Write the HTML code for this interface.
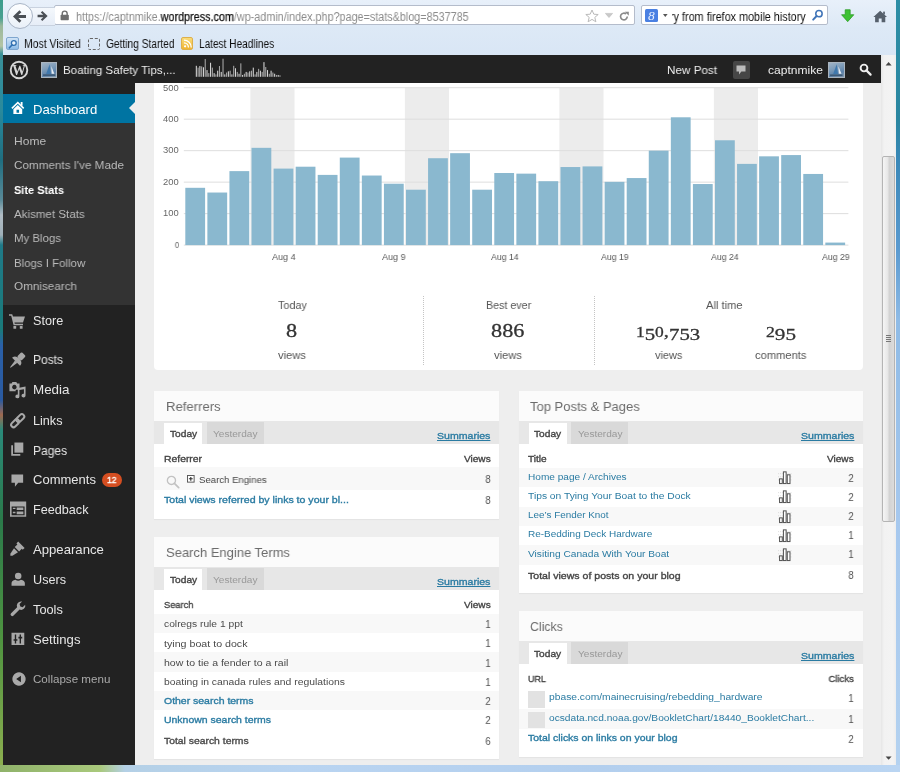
<!DOCTYPE html>
<html lang="en">
<head>
<meta charset="utf-8">
<title>Site Stats ‹ Boating Safety Tips — WordPress</title>
<style>
*{box-sizing:border-box}
html,body{margin:0;padding:0}
body{width:900px;height:772px;overflow:hidden;position:relative;background:#b9d3ee;font-family:"Liberation Sans",sans-serif;font-size:11px;color:#333}
.abs,.a{position:absolute}
svg{position:absolute;overflow:visible}
.t{position:absolute;white-space:pre;line-height:16px;height:16px;z-index:5;will-change:transform}
/* window frame */
#fl{left:0;top:0;width:3px;height:772px;z-index:9;background:linear-gradient(#3c9c8c 0,#48a090 18px,#9ab89c 26px,#b4c4a4 46px,#3a9098 54px,#2a8a9c 110px,#1f6e80 160px,#5a8a98 200px,#b0bcc4 215px,#a0b0b8 235px,#1f7a88 245px,#1a7a7a 330px,#2a60a8 345px,#2a5aa0 400px,#a06a50 415px,#2a8a7a 430px,#2b7a4a 520px,#4f9440 640px,#8fb050 772px)}
#fr{left:896px;top:0;width:4px;height:772px;z-index:9;background:linear-gradient(#2d8ea6 0,#2a86a0 120px,#3a88b8 160px,#5a9ad0 250px,#8fbbe6 320px,#a6c8ee 520px,#b4d2f0 772px)}
#fb{left:0;top:765px;width:900px;height:7px;z-index:9;background:linear-gradient(90deg,#8fb26a 0,#a9c97c 100px,#b4d0e6 125px,#b9d4f1 300px,#b3cfee 600px,#bad5f2 900px)}
/* browser chrome */
#chrome{left:3px;top:0;width:893px;height:55px;background:linear-gradient(#e8f0fa 0,#dde9f6 28px,#d9e6f5 55px)}
#urlbar{left:50.6px;top:4.8px;width:581.4px;height:20.6px;background:#fff;border:1px solid #b4bccb;border-radius:2px}
#searchbar{left:637.8px;top:4.8px;width:187.6px;height:20.6px;background:#fff;border:1px solid #b4bccb;border-radius:2px}
/* page */
#adminbar{left:3px;top:55px;width:878px;height:28px;background:#222}
#sidebar{left:3px;top:83px;width:132px;height:682px;background:#222}
#submenu{left:3px;top:122.6px;width:132px;height:182.6px;background:#333}
#dash{left:3px;top:93.8px;width:132px;height:28.8px;background:#0074a2}
#dash:after{content:"";position:absolute;right:0;top:8.2px;border:6.6px solid transparent;border-right-color:#eee;border-left-width:0}
#content{left:135px;top:83px;width:746px;height:682px;background:#eee;overflow:hidden}
#scroll{left:881px;top:55px;width:15px;height:710px;background:linear-gradient(90deg,#e6e6e6 0,#f2f2f2 3px,#f3f3f3 12px,#ededed 15px)}
#thumb{left:881.5px;top:156px;width:13.5px;height:366px;border:1px solid #b4b4b4;border-radius:2px;background:linear-gradient(90deg,#f5f5f5 0,#e6e6e6 45%,#d2d2d2 55%,#dcdcdc 100%)}
.card{position:absolute;background:#fff;box-shadow:0 1px 1px rgba(0,0,0,.04)}
.tb{position:absolute;left:0;width:100%;background:#e7e7e7}
.tab1{position:absolute;background:#fff}
.tab2{position:absolute;background:#d9d9d9}
.alt{position:absolute;left:0;width:100%;background:#f8f8f8}
.hd{position:absolute;left:0;top:0;width:100%;background:#fbfbfb}
</style>
</head>
<body>
<div class="a" id="chrome">
  <div class="a" id="urlbar"></div>
  <div class="a" id="searchbar"></div>
</div>
<div class="a" style="left:6.6px;top:2.8px;width:26.4px;height:26.4px;border-radius:50%;background:linear-gradient(#fdfeff,#e9f0f8);border:1px solid #a9b5c6;z-index:3"></div>
<div class="a" style="left:30px;top:6.6px;width:25px;height:19px;background:linear-gradient(#f4f8fc,#e6edf7);border:1px solid #c9d2df;border-left:none;border-right:none;z-index:2"></div>
<svg style="left:12.4px;top:8.6px;z-index:6" width="15" height="15" viewBox="0 0 15 15"><path d="M7.4 1.2 L9.4 3.2 L6.4 6 L14 6 L14 9 L6.4 9 L9.4 11.8 L7.4 13.8 L1 7.5 Z" fill="#4a4f55"/></svg>
<svg style="left:36.6px;top:10.2px;z-index:6" width="11.4" height="12" viewBox="0 0 12 12"><path d="M5.6 .8 L4 2.4 L6.6 4.8 L.6 4.8 L.6 7.2 L6.6 7.2 L4 9.6 L5.6 11.2 L11.2 6 Z" fill="#4a4f55"/></svg>
<svg style="left:60.4px;top:10.4px;z-index:6" width="9.4" height="11" viewBox="0 0 10 11"><path d="M2.4 5 L2.4 3.4 a2.6 2.6 0 0 1 5.2 0 L7.6 5" fill="none" stroke="#6e6e6e" stroke-width="1.5"/><rect x=".6" y="4.8" width="8.8" height="5.8" rx=".8" fill="#6e6e6e"/></svg>
<svg style="left:585.4px;top:8.6px;z-index:6" width="14" height="14" viewBox="0 0 14 14"><path d="M7 1 L8.8 5.2 L13.2 5.5 L9.8 8.4 L10.9 12.8 L7 10.4 L3.1 12.8 L4.2 8.4 L.8 5.5 L5.2 5.2 Z" fill="#fff" stroke="#b9b9b9" stroke-width="1"/></svg>
<svg style="left:605.2px;top:13.4px;z-index:6" width="8" height="5" viewBox="0 0 8 5"><path d="M.4 .4 L7.6 .4 L4 4.6 Z" fill="#c9c9c9" stroke="#b5b5b5" stroke-width=".5"/></svg>
<svg style="left:619.4px;top:10.6px;z-index:6" width="10.6" height="11" viewBox="0 0 11 11"><path d="M8.6 5.6 a3.5 3.5 0 1 1 -1.2 -2.7" fill="none" stroke="#8a8a8a" stroke-width="1.7"/><path d="M6 .6 L10.2 .6 L10.2 4.8 Z" fill="#8a8a8a"/></svg>
<div class="a" style="left:645px;top:8.8px;width:13.4px;height:13.6px;background:#4a80e2;border-radius:1.5px;z-index:3"></div>
<span class="t" style="left:648.4px;top:7.6px;font-size:13.5px;color:#e8f0ff;font-family:'Liberation Serif',serif;font-style:italic;z-index:4">8</span>
<svg style="left:662.8px;top:14.4px;z-index:6" width="4.6" height="3" viewBox="0 0 5 3"><path d="M0 0 L5 0 L2.5 3 Z" fill="#555"/></svg>
<svg style="left:812.2px;top:9.4px;z-index:6" width="11.6" height="12" viewBox="0 0 12 12"><circle cx="7.2" cy="4.6" r="3.3" fill="#fff" stroke="#3f74b8" stroke-width="1.6"/><path d="M4.8 7 L1.2 10.8" stroke="#3f74b8" stroke-width="2" stroke-linecap="round"/></svg>
<svg style="left:841.4px;top:9.2px;z-index:6" width="13.4" height="13.4" viewBox="0 0 14 14"><path d="M4.4 .8 L9.6 .8 L9.6 6 L13.4 6 L7 13.2 L.6 6 L4.4 6 Z" fill="#3ec234" stroke="#2a9a24" stroke-width=".8"/></svg>
<svg style="left:872.6px;top:9.6px;z-index:6" width="14.4" height="13" viewBox="0 0 15 13"><path d="M7.5 .6 L14.6 7 L12.8 7 L12.8 12.6 L9 12.6 L9 8.6 L6 8.6 L6 12.6 L2.2 12.6 L2.2 7 L.4 7 Z" fill="#56606c"/><rect x="10.6" y="1.4" width="1.8" height="3" fill="#56606c"/></svg>
<div class="a" style="left:6.4px;top:36.6px;width:12.8px;height:13.4px;border-radius:2px;background:linear-gradient(#cfe3f6,#8dbbe6);border:1px solid #7ea6cf;z-index:3"></div>
<svg style="left:8px;top:38.6px;z-index:6" width="10" height="10" viewBox="0 0 10 10"><circle cx="5.8" cy="4" r="2.4" fill="#eaf3fb" stroke="#2f6fb0" stroke-width="1.3"/><path d="M4 6 L1.4 8.8" stroke="#2f6fb0" stroke-width="1.6" stroke-linecap="round"/></svg>
<div class="a" style="left:87.6px;top:37.6px;width:12px;height:12px;border:1px dashed #666;border-radius:2px;z-index:3"></div>
<div class="a" style="left:181.4px;top:37.4px;width:12px;height:12.4px;border-radius:2px;background:linear-gradient(#f9dc7a,#f0b432);border:1px solid #ddb04c;z-index:3"></div>
<svg style="left:182.8px;top:39px;z-index:6" width="9.4" height="9.4" viewBox="0 0 10 10"><circle cx="2.2" cy="7.8" r="1.2" fill="#fff"/><path d="M1 4.2 a4.8 4.8 0 0 1 4.8 4.8 M1 1.2 a7.8 7.8 0 0 1 7.8 7.8" fill="none" stroke="#fff" stroke-width="1.4"/></svg>
<div class="a" id="adminbar"></div>
<div class="a" id="sidebar"></div>
<div class="a" id="submenu"></div>
<div class="a" id="dash"></div>
<div class="a" id="content"></div>
<div class="card" style="left:154.2px;top:83px;width:708.8px;height:286.6px;border-radius:0 0 4px 4px;box-shadow:none"></div>
<svg style="left:0;top:0" width="900" height="772" viewBox="0 0 900 772">
<rect x="250.4" y="87.7" width="44.1" height="157.4" fill="#ececec"/>
<rect x="404.9" y="87.7" width="44.1" height="157.4" fill="#ececec"/>
<rect x="559.4" y="87.7" width="44.1" height="157.4" fill="#ececec"/>
<rect x="713.9" y="87.7" width="44.1" height="157.4" fill="#ececec"/>
<rect x="183.8" y="244.60" width="664.6" height="1" fill="#dedede"/>
<rect x="183.8" y="213.12" width="664.6" height="1" fill="#dedede"/>
<rect x="183.8" y="181.64" width="664.6" height="1" fill="#dedede"/>
<rect x="183.8" y="150.16" width="664.6" height="1" fill="#dedede"/>
<rect x="183.8" y="118.68" width="664.6" height="1" fill="#dedede"/>
<rect x="183.8" y="87.20" width="664.6" height="1" fill="#dedede"/>
<rect x="185.30" y="187.81" width="19.8" height="57.29" fill="#8ab8cf"/>
<rect x="207.37" y="192.53" width="19.8" height="52.57" fill="#8ab8cf"/>
<rect x="229.44" y="171.12" width="19.8" height="73.98" fill="#8ab8cf"/>
<rect x="251.51" y="147.83" width="19.8" height="97.27" fill="#8ab8cf"/>
<rect x="273.58" y="168.60" width="19.8" height="76.50" fill="#8ab8cf"/>
<rect x="295.65" y="166.71" width="19.8" height="78.39" fill="#8ab8cf"/>
<rect x="317.72" y="174.90" width="19.8" height="70.20" fill="#8ab8cf"/>
<rect x="339.79" y="157.59" width="19.8" height="87.51" fill="#8ab8cf"/>
<rect x="361.86" y="175.53" width="19.8" height="69.57" fill="#8ab8cf"/>
<rect x="383.93" y="183.71" width="19.8" height="61.39" fill="#8ab8cf"/>
<rect x="406.00" y="189.70" width="19.8" height="55.40" fill="#8ab8cf"/>
<rect x="428.07" y="158.22" width="19.8" height="86.88" fill="#8ab8cf"/>
<rect x="450.14" y="153.18" width="19.8" height="91.92" fill="#8ab8cf"/>
<rect x="472.21" y="189.70" width="19.8" height="55.40" fill="#8ab8cf"/>
<rect x="494.28" y="173.01" width="19.8" height="72.09" fill="#8ab8cf"/>
<rect x="516.35" y="173.64" width="19.8" height="71.46" fill="#8ab8cf"/>
<rect x="538.42" y="181.20" width="19.8" height="63.90" fill="#8ab8cf"/>
<rect x="560.49" y="167.03" width="19.8" height="78.07" fill="#8ab8cf"/>
<rect x="582.56" y="166.40" width="19.8" height="78.70" fill="#8ab8cf"/>
<rect x="604.63" y="181.83" width="19.8" height="63.27" fill="#8ab8cf"/>
<rect x="626.70" y="178.05" width="19.8" height="67.05" fill="#8ab8cf"/>
<rect x="648.77" y="150.66" width="19.8" height="94.44" fill="#8ab8cf"/>
<rect x="670.84" y="117.29" width="19.8" height="127.81" fill="#8ab8cf"/>
<rect x="692.91" y="184.03" width="19.8" height="61.07" fill="#8ab8cf"/>
<rect x="714.98" y="140.27" width="19.8" height="104.83" fill="#8ab8cf"/>
<rect x="737.05" y="163.88" width="19.8" height="81.22" fill="#8ab8cf"/>
<rect x="759.12" y="156.33" width="19.8" height="88.77" fill="#8ab8cf"/>
<rect x="781.19" y="155.07" width="19.8" height="90.03" fill="#8ab8cf"/>
<rect x="803.26" y="173.96" width="19.8" height="71.14" fill="#8ab8cf"/>
<rect x="825.33" y="242.58" width="19.8" height="2.52" fill="#8ab8cf"/>
<line x1="423.5" y1="295.5" x2="423.5" y2="364.5" stroke="#c4c4c4" stroke-width="1" stroke-dasharray="1 1" shape-rendering="crispEdges"/>
<line x1="594.5" y1="295.5" x2="594.5" y2="364.5" stroke="#c4c4c4" stroke-width="1" stroke-dasharray="1 1" shape-rendering="crispEdges"/>
</svg>
<div class="card" style="left:154.2px;top:391px;width:344.8px;height:127.8px"><div class="hd" style="height:30px"></div><div class="tb" style="top:30px;height:23px"></div><div class="tab1" style="left:9.8px;top:32px;width:38.4px;height:21px"></div><div class="tab2" style="left:52.6px;top:31.2px;width:56.8px;height:21.8px"></div><div class="alt" style="top:76.4px;height:22.8px"></div></div>
<div class="card" style="left:518.8px;top:391px;width:344.2px;height:202px"><div class="hd" style="height:30px"></div><div class="tb" style="top:30px;height:23px"></div><div class="tab1" style="left:9.8px;top:32px;width:38.4px;height:21px"></div><div class="tab2" style="left:52.6px;top:31.2px;width:56.8px;height:21.8px"></div><div class="alt" style="top:76.8px;height:19.4px"></div><div class="alt" style="top:115.6px;height:19.4px"></div><div class="alt" style="top:154.4px;height:19.4px"></div></div>
<div class="card" style="left:154.2px;top:537px;width:344.8px;height:221.6px"><div class="hd" style="height:30px"></div><div class="tb" style="top:30px;height:23px"></div><div class="tab1" style="left:9.8px;top:32px;width:38.4px;height:21px"></div><div class="tab2" style="left:52.6px;top:31.2px;width:56.8px;height:21.8px"></div><div class="alt" style="top:76.8px;height:19.3px"></div><div class="alt" style="top:115.4px;height:19.3px"></div><div class="alt" style="top:154px;height:19.3px"></div></div>
<div class="card" style="left:518.8px;top:611px;width:344.2px;height:146.4px"><div class="hd" style="height:30px"></div><div class="tb" style="top:30px;height:23px"></div><div class="tab1" style="left:9.8px;top:32px;width:38.4px;height:21px"></div><div class="tab2" style="left:52.6px;top:31.2px;width:56.8px;height:21.8px"></div><div class="alt" style="top:98px;height:20.4px"></div><div class="a" style="left:9.4px;top:80.4px;width:16.6px;height:16.6px;background:#e2e2e2"></div><div class="a" style="left:9.4px;top:100.6px;width:16.6px;height:16.6px;background:#e2e2e2"></div></div>
<svg style="left:10.899999999999999px;top:101.2px;z-index:6" width="13.6" height="13.6" viewBox="0 0 16 16"><g fill="#fff" stroke="none"><path d="M8 .6 L15.6 8 L14.3 9.3 L8 3.2 L1.7 9.3 L.4 8 Z"/><path d="M8 4.8 L13.2 9.8 L13.2 15.4 L2.8 15.4 L2.8 9.8 Z M6.5 10.2 L6.5 13.8 L9.5 13.8 L9.5 10.2 Z" fill-rule="evenodd"/><rect x="11.4" y="1.2" width="2.2" height="4.4"/></g></svg>
<svg style="left:8.8px;top:312.6px;z-index:6" width="16" height="16" viewBox="0 0 16 16"><g fill="#a8a8a8" stroke="none"><path d="M0 1.2 L3.2 1.2 L4 3.4 L16 3.4 L14 9.6 L5.4 9.6 L5.8 10.8 L14 10.8 L14 12.2 L4.6 12.2 L2.2 2.8 L0 2.8 Z" fill-rule="evenodd"/><rect x="4.4" y="13" width="2.8" height="2.8" rx=".6"/><rect x="10.8" y="13" width="2.8" height="2.8" rx=".6"/></g></svg>
<svg style="left:8.999999999999998px;top:352.70000000000005px;z-index:6" width="15.8" height="15.8" viewBox="0 0 16 16"><g fill="#a8a8a8" stroke="none"><g transform="rotate(45 8 8)"><rect x="5" y="-1.8" width="6" height="6.6" rx="1.2"/><path d="M2.4 8 Q3 5 8 4.4 Q13 5 13.6 8 L13.6 9.2 L2.4 9.2 Z"/><path d="M6.3 9 L9.7 9 L8.4 17.4 L7.6 17.4 Z"/></g></g></svg>
<svg style="left:9.200000000000001px;top:380.79999999999995px;z-index:6" width="17.2" height="17.2" viewBox="0 0 16 16"><g fill="#a8a8a8" stroke="none"><path d="M.4 2.4 L2.4 2.4 L3.2 1 L6.8 1 L7.6 2.4 L9.8 2.4 L9.8 8.2 L6.2 8.2 L6.2 9.6 L.4 9.6 Z M5 3.6 a2.1 2.1 0 1 0 .01 0 Z" fill-rule="evenodd"/><path d="M8.2 6.4 L15.4 5.2 L15.4 13.6 a1.9 1.7 0 1 1 -1.5 -1.65 L13.9 7.6 L9.7 8.3 L9.7 14.4 a1.9 1.7 0 1 1 -1.5 -1.65 Z"/></g></svg>
<svg style="left:9.9px;top:412.5px;z-index:6" width="15.4" height="15.4" viewBox="0 0 16 16"><g transform="rotate(-45 8 8)" fill="none" stroke="#a8a8a8" stroke-width="2.1"><rect x="-.6" y="5.5" width="9.6" height="5" rx="2.5"/><rect x="7" y="5.5" width="9.6" height="5" rx="2.5"/></g></svg>
<svg style="left:10.1px;top:441.9px;z-index:6" width="14.2" height="14.2" viewBox="0 0 16 16"><g fill="#a8a8a8" stroke="none"><path d="M5 .6 L15 .6 L15 12 L5 12 Z"/><path d="M1.4 3.6 L3.4 3.6 L3.4 13.4 L11.6 13.4 L11.6 15.4 L1.4 15.4 Z"/></g></svg>
<svg style="left:10.2px;top:472.7px;z-index:6" width="14.6" height="14.6" viewBox="0 0 16 16"><g fill="#a8a8a8" stroke="none"><path d="M1.6 1.6 L14.4 1.6 L14.4 10.8 L9 10.8 L5.4 15 L5.4 10.8 L1.6 10.8 Z"/></g></svg>
<svg style="left:9.500000000000002px;top:501.29999999999995px;z-index:6" width="16.2" height="16.2" viewBox="0 0 16 16"><g fill="#a8a8a8" stroke="none"><path d="M0 .4 L16 .4 L16 15.6 L0 15.6 Z M1.6 5.4 L1.6 14 L14.4 14 L14.4 5.4 Z M2.8 6.6 L5.4 6.6 L5.4 8 L2.8 8 Z M6.6 6.4 L13.2 6.4 L13.2 9 L6.6 9 Z M2.8 10.6 L5.4 10.6 L5.4 12 L2.8 12 Z M6.6 10.4 L13.2 10.4 L13.2 13 L6.6 13 Z" fill-rule="evenodd"/></g></svg>
<svg style="left:10.299999999999999px;top:541.1999999999999px;z-index:6" width="15.2" height="15.2" viewBox="0 0 16 16"><g fill="#a8a8a8" stroke="none"><path d="M8.6 .6 L15.4 7.4 L13.4 9.2 L12.4 8.2 L9.6 11 L5 6.4 L7.8 3.6 L6.8 2.6 Z"/><path d="M4.2 7.6 L8.4 11.8 L2.6 15.6 L.4 15.6 L.4 13.4 Z"/></g></svg>
<svg style="left:10.600000000000001px;top:571.8px;z-index:6" width="14.4" height="14.4" viewBox="0 0 16 16"><g fill="#a8a8a8" stroke="none"><circle cx="8" cy="4.4" r="3.6"/><path d="M.6 15.4 L.6 12.4 Q.6 9.4 5 8.6 Q8 10.8 11 8.6 Q15.4 9.4 15.4 12.4 L15.4 15.4 Z"/></g></svg>
<svg style="left:10.2px;top:601.2px;z-index:6" width="15.6" height="15.6" viewBox="0 0 16 16"><g fill="#a8a8a8" stroke="none"><path d="M11.4 .4 a4.3 4.3 0 0 0 -4.1 5.9 L.9 12.7 a1.8 1.8 0 0 0 2.5 2.5 L9.8 8.8 a4.3 4.3 0 0 0 5.8 -5 L13 6.4 L10.6 5.6 L9.8 3.2 L12.4 .6 Z"/></g></svg>
<svg style="left:11.200000000000001px;top:631.9px;z-index:6" width="13.8" height="13.8" viewBox="0 0 16 16"><g fill="#a8a8a8" stroke="none"><path d="M.6 .8 L15.4 .8 L15.4 15.2 L.6 15.2 Z M4.4 2.8 L4.4 8.4 L3 8.4 L3 10.2 L4.4 10.2 L4.4 13.2 L6 13.2 L6 10.2 L7.4 10.2 L7.4 8.4 L6 8.4 L6 2.8 Z M10 2.8 L10 5.6 L8.6 5.6 L8.6 7.4 L10 7.4 L10 13.2 L11.6 13.2 L11.6 7.4 L13 7.4 L13 5.6 L11.6 5.6 L11.6 2.8 Z" fill-rule="evenodd"/></g></svg>
<svg style="left:11.7px;top:671.9px;z-index:6" width="14" height="14" viewBox="0 0 16 16"><g fill="#aaa" stroke="none"><path d="M8 .4 a7.6 7.6 0 1 0 0.01 0 Z M10.2 4.4 L10.2 11.6 L4.8 8 Z" fill-rule="evenodd"/></g></svg>
<div class="a" style="left:102.4px;top:472.6px;width:19.4px;height:14.8px;border-radius:8px;background:#d54e21;z-index:4"></div>
<svg style="left:8.9px;top:59.8px;z-index:6" width="20" height="20" viewBox="0 0 20 20"><circle cx="10" cy="10" r="8.3" fill="none" stroke="#d6d6d6" stroke-width="1.9"/><text x="10" y="15.4" text-anchor="middle" font-family="Liberation Serif,serif" font-weight="700" font-size="15.5" fill="#d6d6d6" textLength="13.6" lengthAdjust="spacingAndGlyphs">W</text></svg>
<div class="a" style="left:41px;top:62px;width:16.4px;height:16.4px;background:linear-gradient(160deg,#9fb3c6 0,#7d9bb8 40%,#5d83ab 70%,#8298ad 100%);border:1px solid #aab4be;z-index:4"></div>
<svg style="left:41px;top:62px;z-index:6" width="16.4" height="16.4" viewBox="0 0 16 16"><path d="M8.4 2.2 L5 11.6 L9.6 11.6 Z" fill="#3f78ad"/><path d="M10 4 L10.4 11.4 L13 11.4 Z" fill="#e8eef4"/><rect x="2" y="12" width="12" height="1.6" fill="#3c5a78"/></svg>
<svg style="left:0;top:0;z-index:4" width="900" height="100" viewBox="0 0 900 100"><rect x="195.80" y="65.80" width="1.05" height="11.00" fill="#d8d8d8"/><rect x="197.58" y="67.63" width="1.05" height="9.17" fill="#a8a8a8"/><rect x="199.36" y="66.04" width="1.05" height="10.76" fill="#d8d8d8"/><rect x="201.14" y="66.41" width="1.05" height="10.39" fill="#a8a8a8"/><rect x="202.92" y="67.26" width="1.05" height="9.54" fill="#d8d8d8"/><rect x="204.70" y="59.07" width="1.05" height="17.73" fill="#a8a8a8"/><rect x="206.48" y="70.08" width="1.05" height="6.72" fill="#d8d8d8"/><rect x="208.26" y="73.13" width="1.05" height="3.67" fill="#a8a8a8"/><rect x="210.04" y="62.74" width="1.05" height="14.06" fill="#d8d8d8"/><rect x="211.82" y="67.63" width="1.05" height="9.17" fill="#a8a8a8"/><rect x="213.60" y="73.13" width="1.05" height="3.67" fill="#d8d8d8"/><rect x="215.38" y="74.36" width="1.05" height="2.44" fill="#a8a8a8"/><rect x="217.16" y="70.69" width="1.05" height="6.11" fill="#d8d8d8"/><rect x="218.94" y="66.04" width="1.05" height="10.76" fill="#a8a8a8"/><rect x="220.72" y="71.91" width="1.05" height="4.89" fill="#d8d8d8"/><rect x="222.50" y="58.71" width="1.05" height="18.09" fill="#a8a8a8"/><rect x="224.28" y="74.36" width="1.05" height="2.44" fill="#d8d8d8"/><rect x="226.06" y="72.52" width="1.05" height="4.28" fill="#a8a8a8"/><rect x="227.84" y="71.30" width="1.05" height="5.50" fill="#d8d8d8"/><rect x="229.62" y="70.69" width="1.05" height="6.11" fill="#a8a8a8"/><rect x="231.40" y="74.36" width="1.05" height="2.44" fill="#d8d8d8"/><rect x="233.18" y="65.80" width="1.05" height="11.00" fill="#a8a8a8"/><rect x="234.96" y="68.24" width="1.05" height="8.56" fill="#d8d8d8"/><rect x="236.74" y="71.91" width="1.05" height="4.89" fill="#a8a8a8"/><rect x="238.52" y="73.74" width="1.05" height="3.06" fill="#d8d8d8"/><rect x="240.30" y="63.35" width="1.05" height="13.45" fill="#a8a8a8"/><rect x="242.08" y="74.97" width="1.05" height="1.83" fill="#d8d8d8"/><rect x="243.86" y="73.74" width="1.05" height="3.06" fill="#a8a8a8"/><rect x="245.64" y="71.91" width="1.05" height="4.89" fill="#d8d8d8"/><rect x="247.42" y="72.52" width="1.05" height="4.28" fill="#a8a8a8"/><rect x="249.20" y="71.30" width="1.05" height="5.50" fill="#d8d8d8"/><rect x="250.98" y="70.69" width="1.05" height="6.11" fill="#a8a8a8"/><rect x="252.76" y="67.63" width="1.05" height="9.17" fill="#d8d8d8"/><rect x="254.54" y="74.36" width="1.05" height="2.44" fill="#a8a8a8"/><rect x="256.32" y="71.91" width="1.05" height="4.89" fill="#d8d8d8"/><rect x="258.10" y="68.85" width="1.05" height="7.95" fill="#a8a8a8"/><rect x="259.88" y="70.69" width="1.05" height="6.11" fill="#d8d8d8"/><rect x="261.66" y="71.91" width="1.05" height="4.89" fill="#a8a8a8"/><rect x="263.44" y="62.13" width="1.05" height="14.67" fill="#d8d8d8"/><rect x="265.22" y="67.02" width="1.05" height="9.78" fill="#a8a8a8"/><rect x="267.00" y="70.08" width="1.05" height="6.72" fill="#d8d8d8"/><rect x="268.78" y="73.74" width="1.05" height="3.06" fill="#a8a8a8"/><rect x="270.56" y="70.69" width="1.05" height="6.11" fill="#d8d8d8"/><rect x="272.34" y="72.52" width="1.05" height="4.28" fill="#a8a8a8"/><rect x="274.12" y="73.74" width="1.05" height="3.06" fill="#d8d8d8"/><rect x="275.90" y="74.97" width="1.05" height="1.83" fill="#a8a8a8"/><rect x="277.68" y="74.97" width="1.05" height="1.83" fill="#d8d8d8"/><rect x="279.46" y="75.33" width="1.05" height="1.47" fill="#a8a8a8"/></svg>
<div class="a" style="left:732.6px;top:61.4px;width:17.4px;height:17.4px;background:#464646;border-radius:2px;z-index:4"></div>
<svg style="left:735.4px;top:64.2px;z-index:6" width="12" height="12" viewBox="0 0 12 12"><path d="M1.5 1.5 L10.5 1.5 L10.5 7.6 L6.4 7.6 L4 10.4 L4 7.6 L1.5 7.6 Z" fill="#bbb"/></svg>
<div class="a" style="left:828.2px;top:61.6px;width:16.6px;height:16.6px;background:linear-gradient(160deg,#9fb3c6 0,#7d9bb8 40%,#5d83ab 70%,#8298ad 100%);border:1px solid #aab4be;z-index:4"></div>
<svg style="left:828.2px;top:61.6px;z-index:6" width="16.6" height="16.6" viewBox="0 0 16 16"><path d="M8.4 2.2 L5 11.6 L9.6 11.6 Z" fill="#3f78ad"/><path d="M10 4 L10.4 11.4 L13 11.4 Z" fill="#e8eef4"/><rect x="2" y="12" width="12" height="1.6" fill="#3c5a78"/></svg>
<svg style="left:859px;top:63px;z-index:6" width="13" height="13" viewBox="0 0 13 13"><circle cx="5" cy="5" r="3.4" fill="none" stroke="#eee" stroke-width="1.9"/><path d="M7.4 7.4 L11.6 11.6" stroke="#eee" stroke-width="2.2" stroke-linecap="round"/></svg>
<svg style="left:165.6px;top:475px;z-index:6" width="13.6" height="13.6" viewBox="0 0 12 12"><circle cx="4.8" cy="4.8" r="3.6" fill="none" stroke="#c2c2c2" stroke-width="1.2"/><path d="M7.4 7.4 L11.2 11.2" stroke="#c2c2c2" stroke-width="1.5" stroke-linecap="round"/></svg>
<svg style="left:187.2px;top:474.8px;z-index:6" width="7.6" height="7.6" viewBox="0 0 8 8"><rect x=".5" y=".5" width="7" height="7" fill="#fff" stroke="#555" stroke-width="1"/><path d="M2 4h4M4 2v4" stroke="#333" stroke-width="1.2"/></svg>
<svg style="left:778.4px;top:470.20000000000005px;z-index:6" width="14.6" height="14.6" viewBox="0 0 14 14"><path d="M0 3.5h13M0 6.5h13M0 9.5h13" stroke="#ccc" stroke-width=".6" stroke-dasharray="1 1"/><g fill="#fff" stroke="#555" stroke-width="1"><rect x="1.5" y="8.5" width="2.6" height="4.5"/><rect x="5.2" y="1.8" width="2.6" height="11.2"/><rect x="8.9" y="4.6" width="2.6" height="8.4"/></g></svg>
<svg style="left:778.4px;top:489.40000000000003px;z-index:6" width="14.6" height="14.6" viewBox="0 0 14 14"><path d="M0 3.5h13M0 6.5h13M0 9.5h13" stroke="#ccc" stroke-width=".6" stroke-dasharray="1 1"/><g fill="#fff" stroke="#555" stroke-width="1"><rect x="1.5" y="8.5" width="2.6" height="4.5"/><rect x="5.2" y="1.8" width="2.6" height="11.2"/><rect x="8.9" y="4.6" width="2.6" height="8.4"/></g></svg>
<svg style="left:778.4px;top:508.80000000000007px;z-index:6" width="14.6" height="14.6" viewBox="0 0 14 14"><path d="M0 3.5h13M0 6.5h13M0 9.5h13" stroke="#ccc" stroke-width=".6" stroke-dasharray="1 1"/><g fill="#fff" stroke="#555" stroke-width="1"><rect x="1.5" y="8.5" width="2.6" height="4.5"/><rect x="5.2" y="1.8" width="2.6" height="11.2"/><rect x="8.9" y="4.6" width="2.6" height="8.4"/></g></svg>
<svg style="left:778.4px;top:528.2px;z-index:6" width="14.6" height="14.6" viewBox="0 0 14 14"><path d="M0 3.5h13M0 6.5h13M0 9.5h13" stroke="#ccc" stroke-width=".6" stroke-dasharray="1 1"/><g fill="#fff" stroke="#555" stroke-width="1"><rect x="1.5" y="8.5" width="2.6" height="4.5"/><rect x="5.2" y="1.8" width="2.6" height="11.2"/><rect x="8.9" y="4.6" width="2.6" height="8.4"/></g></svg>
<svg style="left:778.4px;top:547.4px;z-index:6" width="14.6" height="14.6" viewBox="0 0 14 14"><path d="M0 3.5h13M0 6.5h13M0 9.5h13" stroke="#ccc" stroke-width=".6" stroke-dasharray="1 1"/><g fill="#fff" stroke="#555" stroke-width="1"><rect x="1.5" y="8.5" width="2.6" height="4.5"/><rect x="5.2" y="1.8" width="2.6" height="11.2"/><rect x="8.9" y="4.6" width="2.6" height="8.4"/></g></svg>
<span class="t" style="top:8.5px;font-size:12px;color:#111;left:76px;transform:scaleX(0.9);transform-origin:0 50%;"><span style="color:#8c8c8c">https://captnmike.</span><span style="-webkit-text-stroke:.25px #111">wordpress.com</span><span style="color:#8c8c8c">/wp-admin/index.php?page=stats&amp;blog=8537785</span></span>
<span class="t" style="top:8.5px;font-size:12px;color:#111;left:669.6px;transform:scaleX(0.9);transform-origin:0 50%;clip-path:inset(0 0 0 1.9%);">ry from firefox mobile history</span>
<span class="t" style="top:36px;font-size:12px;color:#111;left:24px;transform:scaleX(0.87);transform-origin:0 50%;">Most Visited</span>
<span class="t" style="top:36px;font-size:12px;color:#111;left:105.5px;transform:scaleX(0.85);transform-origin:0 50%;">Getting Started</span>
<span class="t" style="top:36px;font-size:12px;color:#111;left:198.7px;transform:scaleX(0.84);transform-origin:0 50%;">Latest Headlines</span>
<span class="t" style="top:62.2px;font-size:11.8px;color:#eee;left:63px;transform:scaleX(0.98);transform-origin:0 50%;">Boating Safety Tips,...</span>
<span class="t" style="top:62.2px;font-size:11.8px;color:#eee;left:666.6px;transform:scaleX(0.99);transform-origin:0 50%;">New Post</span>
<span class="t" style="top:62.2px;font-size:11.8px;color:#eee;left:768px;transform:scaleX(1.02);transform-origin:0 50%;">captnmike</span>
<span class="t" style="top:101.7px;font-size:12.4px;color:#fff;left:33px;transform:scaleX(1.06);transform-origin:0 50%;">Dashboard</span>
<span class="t" style="top:133px;font-size:11.8px;color:#bbb;left:13.5px;transform:scaleX(1.02);transform-origin:0 50%;">Home</span>
<span class="t" style="top:157.1px;font-size:11.8px;color:#bbb;left:13.5px;transform:scaleX(0.99);transform-origin:0 50%;">Comments I&#x27;ve Made</span>
<span class="t" style="top:181.5px;font-size:11.8px;color:#fff;font-weight:700;left:13.5px;transform:scaleX(0.93);transform-origin:0 50%;">Site Stats</span>
<span class="t" style="top:206.1px;font-size:11.8px;color:#bbb;left:13.5px;transform:scaleX(0.98);transform-origin:0 50%;">Akismet Stats</span>
<span class="t" style="top:230.1px;font-size:11.8px;color:#bbb;left:13.5px;transform:scaleX(0.97);transform-origin:0 50%;">My Blogs</span>
<span class="t" style="top:254.5px;font-size:11.8px;color:#bbb;left:13.5px;transform:scaleX(0.97);transform-origin:0 50%;">Blogs I Follow</span>
<span class="t" style="top:278.4px;font-size:11.8px;color:#bbb;left:13.5px;transform:scaleX(0.99);transform-origin:0 50%;">Omnisearch</span>
<span class="t" style="top:312.9px;font-size:12.4px;color:#e6e6e6;left:32.8px;transform:scaleX(1.02);transform-origin:0 50%;">Store</span>
<span class="t" style="top:352.4px;font-size:12.4px;color:#e6e6e6;left:32.8px;transform:scaleX(0.97);transform-origin:0 50%;">Posts</span>
<span class="t" style="top:382.4px;font-size:12.4px;color:#e6e6e6;left:32.8px;transform:scaleX(1.08);transform-origin:0 50%;">Media</span>
<span class="t" style="top:412.6px;font-size:12.4px;color:#e6e6e6;left:32.8px;transform:scaleX(1.02);transform-origin:0 50%;">Links</span>
<span class="t" style="top:442.5px;font-size:12.4px;color:#e6e6e6;left:32.8px;transform:scaleX(0.97);transform-origin:0 50%;">Pages</span>
<span class="t" style="top:472.2px;font-size:12.4px;color:#e6e6e6;left:32.8px;transform:scaleX(1.05);transform-origin:0 50%;">Comments</span>
<span class="t" style="top:502.2px;font-size:12.4px;color:#e6e6e6;left:32.8px;transform:scaleX(1.02);transform-origin:0 50%;">Feedback</span>
<span class="t" style="top:542px;font-size:12.4px;color:#e6e6e6;left:32.8px;transform:scaleX(1.06);transform-origin:0 50%;">Appearance</span>
<span class="t" style="top:572px;font-size:12.4px;color:#e6e6e6;left:32.8px;transform:scaleX(1.02);transform-origin:0 50%;">Users</span>
<span class="t" style="top:601.9px;font-size:12.4px;color:#e6e6e6;left:32.8px;transform:scaleX(1.03);transform-origin:0 50%;">Tools</span>
<span class="t" style="top:631.8px;font-size:12.4px;color:#e6e6e6;left:32.8px;transform:scaleX(1.06);transform-origin:0 50%;">Settings</span>
<span class="t" style="top:671.2px;font-size:11.6px;color:#aaa;left:32.8px;transform:scaleX(1);transform-origin:0 50%;">Collapse menu</span>
<span class="t" style="top:472px;font-size:9px;color:#fff;-webkit-text-stroke:.35px #fff;left:107.2px;transform:scaleX(0.94);transform-origin:0 50%;">12</span>
<span class="t" style="top:236.9px;font-size:9.4px;color:#666;right:721px;transform:scaleX(0.84);transform-origin:100% 50%;">0</span>
<span class="t" style="top:205.42px;font-size:9.4px;color:#666;right:721px;transform:scaleX(1);transform-origin:100% 50%;">100</span>
<span class="t" style="top:173.94px;font-size:9.4px;color:#666;right:721px;transform:scaleX(1);transform-origin:100% 50%;">200</span>
<span class="t" style="top:142.46px;font-size:9.4px;color:#666;right:721px;transform:scaleX(1);transform-origin:100% 50%;">300</span>
<span class="t" style="top:110.98px;font-size:9.4px;color:#666;right:721px;transform:scaleX(1);transform-origin:100% 50%;">400</span>
<span class="t" style="top:79.5px;font-size:9.4px;color:#666;right:721px;transform:scaleX(1);transform-origin:100% 50%;">500</span>
<span class="t" style="top:249.2px;font-size:9.6px;color:#5a5a5a;left:271.97px;transform:scaleX(0.94);transform-origin:0 50%;">Aug 4</span>
<span class="t" style="top:249.2px;font-size:9.6px;color:#5a5a5a;left:382.31px;transform:scaleX(0.94);transform-origin:0 50%;">Aug 9</span>
<span class="t" style="top:249.2px;font-size:9.6px;color:#5a5a5a;left:490.51px;transform:scaleX(0.91);transform-origin:0 50%;">Aug 14</span>
<span class="t" style="top:249.2px;font-size:9.6px;color:#5a5a5a;left:600.87px;transform:scaleX(0.91);transform-origin:0 50%;">Aug 19</span>
<span class="t" style="top:249.2px;font-size:9.6px;color:#5a5a5a;left:711.22px;transform:scaleX(0.91);transform-origin:0 50%;">Aug 24</span>
<span class="t" style="top:249.2px;font-size:9.6px;color:#5a5a5a;left:821.57px;transform:scaleX(0.91);transform-origin:0 50%;">Aug 29</span>
<span class="t" style="top:296.8px;font-size:11.5px;color:#555;left:277.5px;transform:scaleX(0.94);transform-origin:0 50%;">Today</span>
<span class="t" style="top:323.2px;font-size:17.6px;color:#333;font-family:'Liberation Serif',serif;-webkit-text-stroke:.3px #333;left:286.3px;transform:scaleX(1.15);transform-origin:0 50%;"><span style="font-size:1.1em;line-height:0">8</span></span>
<span class="t" style="top:346.6px;font-size:11.5px;color:#555;left:278.3px;transform:scaleX(0.97);transform-origin:0 50%;">views</span>
<span class="t" style="top:296.8px;font-size:11.5px;color:#555;left:486px;transform:scaleX(0.93);transform-origin:0 50%;">Best ever</span>
<span class="t" style="top:323.2px;font-size:17.6px;color:#333;font-family:'Liberation Serif',serif;-webkit-text-stroke:.3px #333;left:491.3px;transform:scaleX(1.15);transform-origin:0 50%;"><span style="font-size:1.1em;line-height:0">8</span><span style="font-size:1.1em;line-height:0">8</span><span style="font-size:1.1em;line-height:0">6</span></span>
<span class="t" style="top:346.6px;font-size:11.5px;color:#555;left:494px;transform:scaleX(0.97);transform-origin:0 50%;">views</span>
<span class="t" style="top:297px;font-size:11.5px;color:#555;left:706.1px;transform:scaleX(0.97);transform-origin:0 50%;">All time</span>
<span class="t" style="top:323.2px;font-size:17.6px;color:#333;font-family:'Liberation Serif',serif;-webkit-text-stroke:.3px #333;left:636.2px;transform:scaleX(1.18);transform-origin:0 50%;"><span style="font-size:.84em">1</span><span style="position:relative;top:.155em">5</span><span style="font-size:.84em">0</span>,<span style="position:relative;top:.155em">7</span><span style="position:relative;top:.155em">5</span><span style="position:relative;top:.155em">3</span></span>
<span class="t" style="top:323.2px;font-size:17.6px;color:#333;font-family:'Liberation Serif',serif;-webkit-text-stroke:.3px #333;left:765.8px;transform:scaleX(1.2);transform-origin:0 50%;"><span style="font-size:.84em">2</span><span style="position:relative;top:.155em">9</span><span style="position:relative;top:.155em">5</span></span>
<span class="t" style="top:346.6px;font-size:11.5px;color:#555;left:654.7px;transform:scaleX(0.95);transform-origin:0 50%;">views</span>
<span class="t" style="top:346.6px;font-size:11.5px;color:#555;left:754.7px;transform:scaleX(0.97);transform-origin:0 50%;">comments</span>
<span class="t" style="top:399.3px;font-size:13.4px;color:#6b6b6b;left:165.6px;transform:scaleX(0.98);transform-origin:0 50%;">Referrers</span>
<span class="t" style="top:425.9px;font-size:9.7px;color:#444;-webkit-text-stroke:.35px #444;left:169.6px;transform:scaleX(1.05);transform-origin:0 50%;">Today</span>
<span class="t" style="top:425.9px;font-size:9.7px;color:#999;left:213px;transform:scaleX(1.04);transform-origin:0 50%;">Yesterday</span>
<span class="t" style="top:427.5px;font-size:9.7px;color:#2a7ba2;-webkit-text-stroke:.35px #2a7ba2;text-decoration:underline;left:437.4px;transform:scaleX(1.09);transform-origin:0 50%;">Summaries</span>
<span class="t" style="top:451.3px;font-size:9.7px;color:#444;-webkit-text-stroke:.35px #444;left:163.6px;transform:scaleX(1.07);transform-origin:0 50%;">Referrer</span>
<span class="t" style="top:451.3px;font-size:9.7px;color:#444;-webkit-text-stroke:.35px #444;right:409.2px;transform:scaleX(1.04);transform-origin:100% 50%;">Views</span>
<span class="t" style="top:471.5px;font-size:9.7px;color:#444;left:198.6px;transform:scaleX(0.99);transform-origin:0 50%;">Search Engines</span>
<span class="t" style="top:471.6px;font-size:10.3px;color:#505050;right:409px;transform:scaleX(0.94);transform-origin:100% 50%;">8</span>
<span class="t" style="top:492.1px;font-size:9.7px;color:#2a7ba2;-webkit-text-stroke:.35px #2a7ba2;left:163.6px;transform:scaleX(1.09);transform-origin:0 50%;">Total views referred by links to your bl...</span>
<span class="t" style="top:492.6px;font-size:10.3px;color:#505050;right:409px;transform:scaleX(0.94);transform-origin:100% 50%;">8</span>
<span class="t" style="top:399.3px;font-size:13.4px;color:#6b6b6b;left:530.2px;transform:scaleX(0.97);transform-origin:0 50%;">Top Posts &amp; Pages</span>
<span class="t" style="top:425.9px;font-size:9.7px;color:#444;-webkit-text-stroke:.35px #444;left:534.2px;transform:scaleX(1.05);transform-origin:0 50%;">Today</span>
<span class="t" style="top:425.9px;font-size:9.7px;color:#999;left:577.6px;transform:scaleX(1.04);transform-origin:0 50%;">Yesterday</span>
<span class="t" style="top:427.5px;font-size:9.7px;color:#2a7ba2;-webkit-text-stroke:.35px #2a7ba2;text-decoration:underline;left:800.7px;transform:scaleX(1.09);transform-origin:0 50%;">Summaries</span>
<span class="t" style="top:451.3px;font-size:9.7px;color:#444;-webkit-text-stroke:.35px #444;left:528.2px;transform:scaleX(1.04);transform-origin:0 50%;">Title</span>
<span class="t" style="top:451.3px;font-size:9.7px;color:#444;-webkit-text-stroke:.35px #444;right:45.9px;transform:scaleX(1.04);transform-origin:100% 50%;">Views</span>
<span class="t" style="top:468.9px;font-size:9.7px;color:#2a7ba2;left:528px;transform:scaleX(1.04);transform-origin:0 50%;">Home page / Archives</span>
<span class="t" style="top:470.6px;font-size:10.3px;color:#505050;right:45.8px;transform:scaleX(0.94);transform-origin:100% 50%;">2</span>
<span class="t" style="top:487.9px;font-size:9.7px;color:#2a7ba2;left:528px;transform:scaleX(1.06);transform-origin:0 50%;">Tips on Tying Your Boat to the Dock</span>
<span class="t" style="top:489.6px;font-size:10.3px;color:#505050;right:45.8px;transform:scaleX(0.94);transform-origin:100% 50%;">2</span>
<span class="t" style="top:506.9px;font-size:9.7px;color:#2a7ba2;left:528px;transform:scaleX(1.02);transform-origin:0 50%;">Lee’s Fender Knot</span>
<span class="t" style="top:508.6px;font-size:10.3px;color:#505050;right:45.8px;transform:scaleX(0.94);transform-origin:100% 50%;">2</span>
<span class="t" style="top:526.1px;font-size:9.7px;color:#2a7ba2;left:528px;transform:scaleX(1.03);transform-origin:0 50%;">Re-Bedding Deck Hardware</span>
<span class="t" style="top:527.8px;font-size:10.3px;color:#505050;right:45.8px;transform:scaleX(0.94);transform-origin:100% 50%;">1</span>
<span class="t" style="top:545.7px;font-size:9.7px;color:#2a7ba2;left:528px;transform:scaleX(1.05);transform-origin:0 50%;">Visiting Canada With Your Boat</span>
<span class="t" style="top:547.4px;font-size:10.3px;color:#505050;right:45.8px;transform:scaleX(0.94);transform-origin:100% 50%;">1</span>
<span class="t" style="top:568.1px;font-size:9.7px;color:#444;-webkit-text-stroke:.35px #444;left:528px;transform:scaleX(1.09);transform-origin:0 50%;">Total views of posts on your blog</span>
<span class="t" style="top:568.4px;font-size:10.3px;color:#505050;right:45.8px;transform:scaleX(0.94);transform-origin:100% 50%;">8</span>
<span class="t" style="top:545.3px;font-size:13.4px;color:#6b6b6b;left:165.6px;transform:scaleX(0.97);transform-origin:0 50%;">Search Engine Terms</span>
<span class="t" style="top:571.9px;font-size:9.7px;color:#444;-webkit-text-stroke:.35px #444;left:169.6px;transform:scaleX(1.05);transform-origin:0 50%;">Today</span>
<span class="t" style="top:571.9px;font-size:9.7px;color:#999;left:213px;transform:scaleX(1.04);transform-origin:0 50%;">Yesterday</span>
<span class="t" style="top:573.5px;font-size:9.7px;color:#2a7ba2;-webkit-text-stroke:.35px #2a7ba2;text-decoration:underline;left:437.4px;transform:scaleX(1.09);transform-origin:0 50%;">Summaries</span>
<span class="t" style="top:597.3px;font-size:9.7px;color:#444;-webkit-text-stroke:.35px #444;left:163.6px;transform:scaleX(0.96);transform-origin:0 50%;">Search</span>
<span class="t" style="top:597.3px;font-size:9.7px;color:#444;-webkit-text-stroke:.35px #444;right:409.2px;transform:scaleX(1.04);transform-origin:100% 50%;">Views</span>
<span class="t" style="top:615.9px;font-size:9.7px;color:#4a4a4a;left:163.6px;transform:scaleX(1.06);transform-origin:0 50%;">colregs rule 1 ppt</span>
<span class="t" style="top:616.6px;font-size:10.3px;color:#505050;right:409px;transform:scaleX(0.94);transform-origin:100% 50%;">1</span>
<span class="t" style="top:635.5px;font-size:9.7px;color:#4a4a4a;left:163.6px;transform:scaleX(1.1);transform-origin:0 50%;">tying boat to dock</span>
<span class="t" style="top:636.2px;font-size:10.3px;color:#505050;right:409px;transform:scaleX(0.94);transform-origin:100% 50%;">1</span>
<span class="t" style="top:655.1px;font-size:9.7px;color:#4a4a4a;left:163.6px;transform:scaleX(1.09);transform-origin:0 50%;">how to tie a fender to a rail</span>
<span class="t" style="top:655.8px;font-size:10.3px;color:#505050;right:409px;transform:scaleX(0.94);transform-origin:100% 50%;">1</span>
<span class="t" style="top:674.3px;font-size:9.7px;color:#4a4a4a;left:163.6px;transform:scaleX(1.07);transform-origin:0 50%;">boating in canada rules and regulations</span>
<span class="t" style="top:675px;font-size:10.3px;color:#505050;right:409px;transform:scaleX(0.94);transform-origin:100% 50%;">1</span>
<span class="t" style="top:693.1px;font-size:9.7px;color:#2a7ba2;-webkit-text-stroke:.35px #2a7ba2;left:163.6px;transform:scaleX(1.08);transform-origin:0 50%;">Other search terms</span>
<span class="t" style="top:693.8px;font-size:10.3px;color:#505050;right:409px;transform:scaleX(0.94);transform-origin:100% 50%;">2</span>
<span class="t" style="top:712.3px;font-size:9.7px;color:#2a7ba2;-webkit-text-stroke:.35px #2a7ba2;left:163.6px;transform:scaleX(1.08);transform-origin:0 50%;">Unknown search terms</span>
<span class="t" style="top:713px;font-size:10.3px;color:#505050;right:409px;transform:scaleX(0.94);transform-origin:100% 50%;">2</span>
<span class="t" style="top:733.1px;font-size:9.7px;color:#4a4a4a;-webkit-text-stroke:.35px #4a4a4a;left:163.6px;transform:scaleX(1.07);transform-origin:0 50%;">Total search terms</span>
<span class="t" style="top:733.8px;font-size:10.3px;color:#505050;right:409px;transform:scaleX(0.94);transform-origin:100% 50%;">6</span>
<span class="t" style="top:619.3px;font-size:13.4px;color:#6b6b6b;left:530.2px;transform:scaleX(0.92);transform-origin:0 50%;">Clicks</span>
<span class="t" style="top:645.9px;font-size:9.7px;color:#444;-webkit-text-stroke:.35px #444;left:534.2px;transform:scaleX(1.05);transform-origin:0 50%;">Today</span>
<span class="t" style="top:645.9px;font-size:9.7px;color:#999;left:577.6px;transform:scaleX(1.04);transform-origin:0 50%;">Yesterday</span>
<span class="t" style="top:647.5px;font-size:9.7px;color:#2a7ba2;-webkit-text-stroke:.35px #2a7ba2;text-decoration:underline;left:800.7px;transform:scaleX(1.09);transform-origin:0 50%;">Summaries</span>
<span class="t" style="top:671.3px;font-size:9.7px;color:#444;-webkit-text-stroke:.35px #444;left:528.2px;transform:scaleX(0.92);transform-origin:0 50%;">URL</span>
<span class="t" style="top:671.3px;font-size:9.7px;color:#444;-webkit-text-stroke:.35px #444;right:45.9px;transform:scaleX(0.98);transform-origin:100% 50%;">Clicks</span>
<span class="t" style="top:689.3px;font-size:9.7px;color:#2a7ba2;left:549.2px;transform:scaleX(1.06);transform-origin:0 50%;">pbase.com/mainecruising/rebedding_hardware</span>
<span class="t" style="top:691px;font-size:10.3px;color:#505050;right:45.8px;transform:scaleX(0.94);transform-origin:100% 50%;">1</span>
<span class="t" style="top:710.1px;font-size:9.7px;color:#2a7ba2;left:549.2px;transform:scaleX(1.05);transform-origin:0 50%;">ocsdata.ncd.noaa.gov/BookletChart/18440_BookletChart...</span>
<span class="t" style="top:712px;font-size:10.3px;color:#505050;right:45.8px;transform:scaleX(0.94);transform-origin:100% 50%;">1</span>
<span class="t" style="top:730.3px;font-size:9.7px;color:#2a7ba2;-webkit-text-stroke:.35px #2a7ba2;left:528px;transform:scaleX(1.08);transform-origin:0 50%;">Total clicks on links on your blog</span>
<span class="t" style="top:732px;font-size:10.3px;color:#505050;right:45.8px;transform:scaleX(0.94);transform-origin:100% 50%;">2</span>
<div class="a" id="scroll"></div>
<div class="a" id="thumb"></div>
<svg style="left:881px;top:55px" width="15" height="710" viewBox="0 0 15 710"><path d="M4.6 10.4 L7.6 7 L10.6 10.4 Z" fill="#444"/><path d="M4.6 701.4 L10.6 701.4 L7.6 704.8 Z" fill="#444"/><path d="M5 280.5h5M5 282.5h5M5 284.5h5M5 286.5h5" stroke="#777" stroke-width="1"/></svg>
<div class="a" id="fl"></div>
<div class="a" id="fr"></div>
<div class="a" id="fb"></div>
</body>
</html>
